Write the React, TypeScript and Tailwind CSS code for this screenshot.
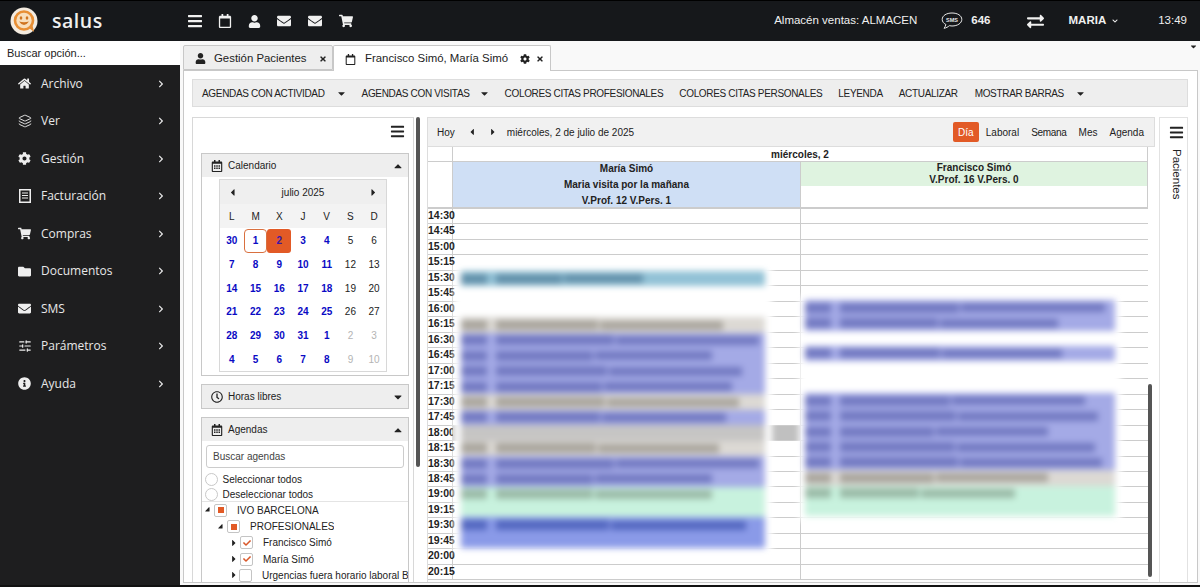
import { ReactNode } from "react";
import { Layers, SlidersHorizontal } from "lucide-react";
import {
  FaBars,
  FaCaretDown,
  FaCaretLeft,
  FaCaretRight,
  FaCaretUp,
  FaCheck,
  FaChevronDown,
  FaChevronRight,
  FaCog,
  FaEnvelope,
  FaExchangeAlt,
  FaFolder,
  FaHome,
  FaInfoCircle,
  FaRegCalendar,
  FaRegCalendarAlt,
  FaRegClock,
  FaShoppingCart,
  FaTimes,
  FaUser,
} from "react-icons/fa";

function InvoiceIcon() {
  return (
    <svg width="12" height="14" viewBox="0 0 12 14" className="ml-px">
      <rect x="0.75" y="0.75" width="10.500" height="12.500" fill="none" stroke="#eeeeee" strokeWidth="1.500" />
      <path d="M3 4h6M3 6.500h6M3 9h6" stroke="#eeeeee" strokeWidth="1.200" />
    </svg>
  );
}

const menu = [
  { name: "Archivo", icon: <FaHome /> },
  { name: "Ver", icon: <Layers size={14} strokeWidth={1.6} /> },
  { name: "Gestión", icon: <FaCog /> },
  { name: "Facturación", icon: <InvoiceIcon /> },
  { name: "Compras", icon: <FaShoppingCart /> },
  { name: "Documentos", icon: <FaFolder /> },
  { name: "SMS", icon: <FaEnvelope /> },
  { name: "Parámetros", icon: <SlidersHorizontal size={14} strokeWidth={2} /> },
  { name: "Ayuda", icon: <FaInfoCircle /> },
];

const times = [
  "14:30", "14:45", "15:00", "15:15", "15:30", "15:45", "16:00", "16:15",
  "16:30", "16:45", "17:00", "17:15", "17:30", "17:45", "18:00", "18:15",
  "18:30", "18:45", "19:00", "19:15", "19:30", "19:45", "20:00", "20:15",
];

const weeks = [
  [30, 1, 2, 3, 4, 5, 6],
  [7, 8, 9, 10, 11, 12, 13],
  [14, 15, 16, 17, 18, 19, 20],
  [21, 22, 23, 24, 25, 26, 27],
  [28, 29, 30, 31, 1, 2, 3],
  [4, 5, 6, 7, 8, 9, 10],
];

// blurred appointments: background, text colour, width of each text line
const blue = { bg: "bg-[#a4aae6]", bar: "bg-[#737ac2]" };
const beige = { bg: "bg-[#dcd9d4]", bar: "bg-[#aaa69e]" };
const green = { bg: "bg-[#c8f2de]", bar: "bg-[#9bbba8]" };
const strong = { bg: "bg-[#8a9ae8]", bar: "bg-[#5468c0]" };
const teal = { bg: "bg-[#92c2d6]", bar: "bg-[#6391ab]" };
const grey = { bg: "bg-[#c6c5c4]", bar: "bg-[#c6c5c4]" };

const leftBands = [
  { ...teal, lines: [182], top: "mt-[6px]" },
  { ...beige, lines: [262], top: "mt-[31px]" },
  { ...blue, lines: [298, 251, 281, 271], top: "" },
  { ...beige, lines: [278], top: "" },
  { ...blue, lines: [265], top: "" },
  { ...grey, lines: [0], top: "" },
  { ...beige, lines: [258], top: "" },
  { ...blue, lines: [298, 251], top: "" },
  { ...green, lines: [251, 0], top: "" },
  { ...strong, lines: [285, 0], top: "" },
];

const rightBands = [
  { ...blue, lines: [300, 253], top: "mt-[4px]" },
  { ...blue, lines: [257], top: "mt-[15px]" },
  { ...blue, lines: [280, 293, 243, 290, 297], top: "mt-[32px]" },
  { ...beige, lines: [243], top: "" },
  { ...green, lines: [210, 0], top: "" },
];

function Band({ bg, bar, lines, top }: { bg: string; bar: string; lines: number[]; top: string }) {
  return (
    <div className={`${bg} ${top}`}>
      {lines.map((w, i) => (
        <div key={i} className="flex h-[15.400px] items-center">
          {w > 0 && <div className={`${bar} h-[10px] w-[26px]`} />}
          {w > 0 && <div className={`${bar} ml-[9px] h-[10px]`} style={{ width: Math.round((w - 35) * 0.45) }} />}
          {w > 0 && <div className={`${bar} ml-[2px] h-[9px]`} style={{ width: w - 37 - Math.round((w - 35) * 0.45) }} />}
        </div>
      ))}
    </div>
  );
}

function Panel({ icon, title, open, children }: { icon: ReactNode; title: string; open: boolean; children?: ReactNode }) {
  return (
    <div className="ml-[8px] mr-[4px] border border-[#c8c8c8]">
      <div className="flex h-[23px] items-center bg-[#eeeeee] pl-[9px] pr-[4px] text-[10px] text-[#222]">
        <span className="mr-[5px] text-[12px] text-[#222]">{icon}</span>
        <span className="flex-1">{title}</span>
        {open ? <FaCaretUp className="text-[12px]" /> : <FaCaretDown className="text-[12px]" />}
      </div>
      {children}
    </div>
  );
}

function TreeRow({ depth, label, state }: { depth: string; label: string; state: "some" | "on" | "off" }) {
  return (
    <div className={`flex h-[16.300px] items-center whitespace-nowrap ${depth}`}>
      {state === "some" ? (
        <span className="w-[9px] text-[10px] text-[#222]">
          <FaCaretDown className="-ml-[2px] -rotate-45" />
        </span>
      ) : (
        <span className="w-[9px] text-[10px] text-[#222]">
          <FaCaretRight className="-ml-[2px]" />
        </span>
      )}
      <span className="flex h-[13px] w-[13px] shrink-0 items-center justify-center rounded-[2px] border border-[#c4c4c4] bg-white">
        {state === "some" && <span className="h-[6px] w-[6px] bg-[#e25a26]" />}
        {state === "on" && <FaCheck className="text-[8px] text-[#d9582a]" />}
      </span>
      <span className="ml-[10px] min-w-0 overflow-hidden text-[10px] text-[#222]">{label}</span>
    </div>
  );
}

function Logo() {
  return (
    <svg width="28" height="28" viewBox="0 0 28 28">
      <circle cx="14" cy="14" r="13.500" fill="#f3ebe0" />
      <path d="M18 20 L24 25 L22 16 Z" fill="#e88f35" />
      <circle cx="14" cy="13.500" r="9" fill="#f8dfbd" stroke="#e88f35" strokeWidth="2.600" />
      <ellipse cx="11" cy="11" rx="1.300" ry="1.800" fill="#cf7420" />
      <ellipse cx="17" cy="11" rx="1.300" ry="1.800" fill="#cf7420" />
      <path d="M9 14.500 Q14 21.500 19 14.500 Q14 16 9 14.500 Z" fill="#cf7420" />
    </svg>
  );
}

function SmsIcon() {
  return (
    <svg width="22" height="18" viewBox="0 0 22 18">
      <path
        d="M11 1C5.500 1 1.200 3.600 1.200 7.400c0 2.200 1.500 4 3.700 5.100-.2 1.300-1 2.600-1.800 3.800 2-.3 3.900-1.400 5.200-2.600.9.2 1.800.3 2.700.3 5.500 0 9.800-2.800 9.800-6.600S16.500 1 11 1z"
        fill="none"
        stroke="#e8e8e8"
        strokeWidth="1"
      />
      <text x="11" y="9.500" textAnchor="middle" fontSize="5.500" fontWeight="700" fill="#e8e8e8" fontFamily="Liberation Sans, sans-serif">
        SMS
      </text>
    </svg>
  );
}

export default function App() {
  return (
    <div className="flex h-[587px] w-[1200px] flex-col overflow-hidden bg-white font-['Liberation_Sans',Arial,sans-serif]">
      {/* Top bar */}
      <header className="flex h-[41px] shrink-0 items-center border-t border-[#000] bg-[#16181b] text-[#f0f0f0]">
        <div className="ml-[10px] flex w-[177px] items-center gap-[14px]">
          <Logo />
          <span className="font-['Open_Sans',sans-serif] text-[19.500px] font-semibold leading-none tracking-[0.5px]">salus</span>
        </div>
        <div className="flex items-center text-[14px]">
          <FaBars className="text-[16px]" />
          <FaRegCalendar className="ml-[15px] text-[14px]" />
          <FaUser className="ml-[16px] text-[13px]" />
          <FaEnvelope className="ml-[16px] text-[14px]" />
          <FaEnvelope className="ml-[17px] text-[14px]" />
          <FaShoppingCart className="ml-[17px] text-[14px]" />
        </div>
        <div className="ml-auto flex items-center pr-[13px] text-[11.500px]">
          <span>Almacén ventas: ALMACEN</span>
          <span className="ml-[24px]"><SmsIcon /></span>
          <span className="ml-[8px] font-bold">646</span>
          <FaExchangeAlt className="ml-[36px] text-[17px]" />
          <span className="ml-[25px] font-bold">MARIA</span>
          <FaChevronDown className="ml-[6px] text-[6px]" />
          <span className="ml-[40px]">13:49</span>
        </div>
      </header>

      <div className="flex min-h-0 flex-1">
        {/* Sidebar */}
        <aside className="flex w-[180px] shrink-0 flex-col">
          <div className="flex h-[24px] items-center pl-[7px] text-[11px] text-[#222]">Buscar opción...</div>
          <nav className="flex-1 bg-[#1e1e1f] font-['Open_Sans',sans-serif] text-[12px] text-[#e8e8e8]">
            {menu.map((m) => (
              <div key={m.name} className="flex h-[37.500px] items-center pl-[18px] pr-[15px]">
                <span className="w-[23px] text-[13px] text-[#eeeeee]">{m.icon}</span>
                <span className="flex-1">{m.name}</span>
                <FaChevronRight className="text-[8px]" />
              </div>
            ))}
          </nav>
        </aside>

        {/* Main */}
        <main className="flex min-w-0 flex-1 flex-col bg-[#f9f9f9] pl-[3px] pr-[2px]">
          {/* Tabs */}
          <div className="mt-[3px] flex h-[26px] shrink-0 items-end text-[11.400px] text-[#222]">
            <div className="flex h-[25px] w-[150px] items-center rounded-t-[2px] border border-[#c8c8c8] bg-[#eeeeee] pl-[11px] pr-[5px] pt-[2px]">
              <FaUser className="text-[11px]" />
              <span className="ml-[8px] flex-1">Gestión Pacientes</span>
              <FaTimes className="text-[8px]" />
            </div>
            <div className="relative z-10 -mb-px flex h-[26px] w-[218px] items-center rounded-t-[2px] border border-b-0 border-[#c8c8c8] bg-white pl-[11px] pr-[6px] pt-[1px]">
              <FaRegCalendar className="text-[11px]" />
              <span className="ml-[9px] flex-1">Francisco Simó, María Simó</span>
              <FaCog className="mr-[6px] text-[10px]" />
              <FaTimes className="text-[8px]" />
            </div>
            <FaCaretDown className="ml-auto mb-[19px] text-[9px]" />
          </div>

          <div className="mb-[2px] flex min-h-0 flex-1 flex-col border border-[#c8c8c8] bg-white pl-[8px] pr-[9px] pt-[8px]">
            {/* Toolbar */}
            <div className="flex h-[28px] shrink-0 items-center whitespace-nowrap border border-[#dddddd] bg-[#eeeeee] pl-[9px] text-[10px] tracking-[-0.33px] text-[#222]">
              <span>AGENDAS CON ACTIVIDAD</span>
              <FaCaretDown className="ml-[11.500px] text-[11px]" />
              <span className="ml-[14.500px]">AGENDAS CON VISITAS</span>
              <FaCaretDown className="ml-[9.500px] text-[11px]" />
              <span className="ml-[14.500px]">COLORES CITAS PROFESIONALES</span>
              <span className="ml-[16px]">COLORES CITAS PERSONALES</span>
              <span className="ml-[16px]">LEYENDA</span>
              <span className="ml-[16px]">ACTUALIZAR</span>
              <span className="ml-[17px]">MOSTRAR BARRAS</span>
              <FaCaretDown className="ml-[11px] text-[11px]" />
            </div>

            <div className="mt-[10px] flex min-h-0 flex-1">
              {/* Left panel */}
              <div className="relative w-[235px] shrink-0 pr-[13px]">
                <div className="h-full overflow-hidden border border-b-0 border-[#d8d8d8]">
                  <div className="flex h-[35px] justify-end pr-[8px] pt-[6px]">
                    <FaBars className="text-[15px] text-[#222]" />
                  </div>
                  <Panel icon={<FaRegCalendarAlt />} title="Calendario" open>
                    <div className="pb-[3px] pl-[17px] pt-[2px]">
                      <div className="w-[168px] border border-[#d8d8d8] text-[10px] text-[#222]">
                        <div className="flex h-[24px] items-center justify-between bg-[#efefef] px-[7px]">
                          <FaCaretLeft className="text-[11px]" />
                          <span>julio 2025</span>
                          <FaCaretRight className="text-[11px]" />
                        </div>
                        <div className="grid h-[24px] grid-cols-7 items-center bg-[#f3f3f3] text-center">
                          {["L", "M", "X", "J", "V", "S", "D"].map((d) => (
                            <span key={d}>{d}</span>
                          ))}
                        </div>
                        {weeks.map((w, r) => (
                          <div key={r} className={`grid h-[23.700px] grid-cols-7 text-center ${r === 0 ? "mt-px" : ""}`}>
                            {w.map((d, c) => {
                              const muted = r === 4 ? c > 4 : r === 5 && c > 4;
                              const weekend = c > 4 && !muted;
                              const today = r === 0 && c === 1;
                              const sel = r === 0 && c === 2;
                              let tone = "font-bold text-[#0a0ac4]";
                              if (muted) tone = "text-[#b4b4b4]";
                              if (weekend) tone = "text-[#222]";
                              if (today) tone = "font-bold text-[#0a0ac4] rounded-[4px] border border-[#d9703f]";
                              if (sel) tone = "font-bold text-[#3a16a8] rounded-[3px] bg-[#e25a26]";
                              return (
                                <span key={c} className={`flex items-center justify-center ${tone}`}>
                                  {d}
                                </span>
                              );
                            })}
                          </div>
                        ))}
                      </div>
                    </div>
                  </Panel>
                  <div className="mt-[8px]">
                    <Panel icon={<FaRegClock />} title="Horas libres" open={false} />
                  </div>
                  <div className="mt-[8px]">
                    <Panel icon={<FaRegCalendarAlt />} title="Agendas" open>
                      <div className="px-[4px] pt-[4px]">
                        <div className="flex h-[23px] items-center rounded-[3px] border border-[#cccccc] pl-[6px] text-[10px] text-[#444]">
                          Buscar agendas
                        </div>
                      </div>
                      <div className="flex h-[15px] items-center pl-[3px] pt-[8px] text-[10px] text-[#222]">
                        <span className="mr-[5px] h-[12.500px] w-[12.500px] rounded-full border border-[#c8c8c8]" />
                        Seleccionar todos
                      </div>
                      <div className="mt-[2px] flex h-[17px] items-center border-b border-[#e4e4e4] pb-[2px] pl-[3px] pt-[5px] text-[10px] text-[#222]">
                        <span className="mr-[5px] h-[12.500px] w-[12.500px] rounded-full border border-[#c8c8c8]" />
                        Deseleccionar todos
                      </div>
                      <div className="overflow-hidden">
                        <TreeRow depth="pl-[3px]" label="IVO BARCELONA" state="some" />
                        <TreeRow depth="pl-[16px]" label="PROFESIONALES" state="some" />
                        <TreeRow depth="pl-[29px]" label="Francisco Simó" state="on" />
                        <TreeRow depth="pl-[29px]" label="María Simó" state="on" />
                        <TreeRow depth="pl-[29px]" label="Urgencias fuera horario laboral Barcelona" state="off" />
                      </div>
                    </Panel>
                  </div>
                </div>
                {/* left scrollbar */}
                <div className="absolute right-[7px] top-0 h-[350px] w-[4px] rounded-full bg-[#555555]" />
              </div>

              {/* Scheduler */}
              <div className="flex w-[728px] shrink-0 flex-col border-l border-[#dddddd]">
                <div className="flex h-[30px] shrink-0 items-center border border-l-0 border-[#dddddd] bg-[#f1f1f1] pl-[9px] pr-[10px] text-[10px] text-[#222]">
                  <span>Hoy</span>
                  <FaCaretLeft className="ml-[12px] text-[10px]" />
                  <FaCaretRight className="ml-[11px] text-[10px]" />
                  <span className="ml-[9px]">miércoles, 2 de julio de 2025</span>
                  <span className="ml-auto flex h-[20px] w-[26px] items-center justify-center rounded-[2px] bg-[#e25a26] text-white">Día</span>
                  <span className="ml-[7px]">Laboral</span>
                  <span className="ml-[12px] tracking-[-0.3px]">Semana</span>
                  <span className="ml-[12px]">Mes</span>
                  <span className="ml-[12px]">Agenda</span>
                </div>

                <div className="relative flex min-h-0 flex-1 flex-col overflow-hidden">
                  <div className="mr-[7px] shrink-0 border-b-2 border-r border-[#cccccc] text-[10px] font-bold text-[#222]">
                    <div className="flex h-[15px] border-b border-[#cccccc]">
                      <div className="w-[25px] border-r border-[#cccccc]" />
                      <div className="flex-1 text-center leading-[15px]">miércoles, 2</div>
                    </div>
                    <div className="flex h-[45px]">
                      <div className="w-[25px] border-r border-[#cccccc]" />
                      <div className="w-[348px] border-r border-[#cccccc] bg-[#cfdff5] text-center leading-[16px]">
                        <div className="-mt-px">María Simó</div>
                        <div>Maria visita por la mañana</div>
                        <div>V.Prof. 12 V.Pers. 1</div>
                      </div>
                      <div className="flex-1">
                        <div className="h-[24px] bg-[#dff3e0] text-center leading-[12px]">
                          <div>Francisco Simó</div>
                          <div>V.Prof. 16 V.Pers. 0</div>
                        </div>
                      </div>
                    </div>
                  </div>

                  <div className="relative mr-[7px] min-h-0 flex-1 overflow-hidden bg-[#fbfbfb]">
                    {times.map((t) => (
                      <div key={t} className="flex h-[15.480px] border-b border-[#cccccc] bg-white text-[10.500px] font-bold leading-[13px] text-[#222]">
                        <div className="w-[25px] border-r border-[#cccccc]">{t}</div>
                        <div className={`w-[348px] border-r border-[#cccccc] ${t === "18:00" ? "bg-[#c0c0c0]" : ""}`} />
                        <div className="flex-1" />
                      </div>
                    ))}

                    {/* blurred appointments, left column */}
                    <div className="absolute left-[26px] top-[56px] h-[288px] w-[318px] bg-white px-[7px] blur-[3px]">
                      {leftBands.map((b, i) => (
                        <Band key={i} {...b} />
                      ))}
                    </div>
                    {/* blurred appointments, right column */}
                    <div className="absolute left-[371px] top-[87px] h-[225px] w-[322px] bg-white px-[6px] blur-[3px]">
                      {rightBands.map((b, i) => (
                        <Band key={i} {...b} />
                      ))}
                    </div>
                  </div>

                  {/* right scrollbar */}
                  <div className="absolute bottom-[5px] right-[3px] h-[193px] w-[4px] rounded-full bg-[#555555]" />
                </div>
              </div>

              {/* Pacientes */}
              <div className="ml-[4px] flex min-w-0 flex-1 flex-col items-center border-x border-t border-[#e2e2e2] pl-[5px] pt-[7px] text-[#222]">
                <FaBars className="text-[15px]" />
                <span className="mt-[9px] text-[11.500px] [writing-mode:vertical-rl]">Pacientes</span>
              </div>
            </div>
          </div>
        </main>
      </div>
      <div className="h-[2px] shrink-0 bg-[#111]" />
    </div>
  );
}
